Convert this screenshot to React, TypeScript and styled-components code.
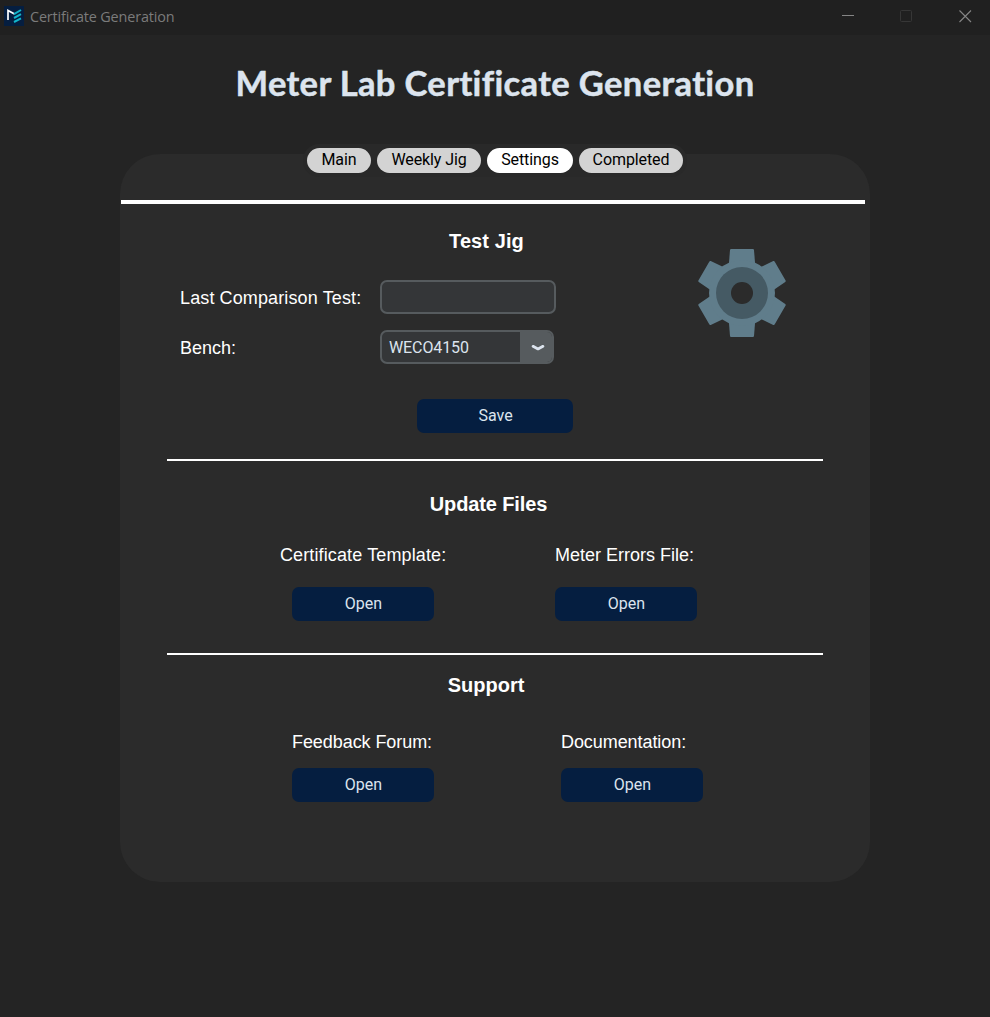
import React from "react";
import styled, { createGlobalStyle } from "styled-components";

const GlobalStyle = createGlobalStyle`
  * { box-sizing: border-box; }
  html, body { margin: 0; padding: 0; background: #242424; }
  button, input { font: inherit; margin: 0; }
`;

const Window = styled.div`
  width: 990px;
  height: 1017px;
  overflow: hidden;
  display: flex;
  flex-direction: column;
  align-items: center;
  background: #242424;
  font-family: Roboto, sans-serif;
  font-size: 16px;
`;

const TitleBar = styled.header`
  width: 100%;
  height: 35px;
  flex: none;
  display: flex;
  align-items: flex-start;
  background: #202020;
  padding: 6px 18px 0 4px;
`;

const Caption = styled.span`
  margin-left: 6px;
  font: 14.4px/21px "Open Sans", sans-serif;
  letter-spacing: -0.15px;
  color: #7b7b7b;
  flex: 1;
`;

const WindowControls = styled.div`
  display: flex;
  gap: 46px;
  padding-top: 4px;
  svg { display: block; }
`;

const PageTitle = styled.h1`
  margin: 26px 0 0;
  height: 83px;
  font: 700 34.5px/44px Lato, sans-serif;
  letter-spacing: 0.37px;
  -webkit-text-stroke: 0.5px #dce4ee;
  color: #dce4ee;
  white-space: nowrap;
`;

const Panel = styled.main`
  width: 750px;
  height: 728px;
  margin-top: 10px;
  flex: none;
  display: flex;
  flex-direction: column;
  background: #2b2b2b;
  border-radius: 40px;
`;

const Tabs = styled.nav`
  align-self: center;
  display: flex;
  flex: none;
  gap: 6px;
  height: 33px;
  margin-top: -10px;
  padding: 4px;
  border-radius: 16px;
  background: #292929;
`;

const Tab = styled.button<{ $width: number; $active?: boolean }>`
  width: ${(p) => p.$width}px;
  height: 25px;
  padding: 0 0 2px;
  border: 0;
  border-radius: 13px;
  background: ${(p) => (p.$active ? "#ffffff" : "#d3d3d3")};
  color: #000;
  line-height: 23px;
  letter-spacing: -0.1px;
  white-space: nowrap;
`;

const HeaderRule = styled.div`
  height: 4px;
  flex: none;
  margin: 23px 5px 0 1px;
  background: #fff;
`;

const Rule = styled.div<{ $top: number }>`
  height: 2px;
  flex: none;
  margin: ${(p) => p.$top}px 47px 0;
  background: #fff;
`;

const SectionTitle = styled.h2<{ $shift: number; $spacing?: number }>`
  width: 750px;
  margin: 0;
  padding-right: ${(p) => p.$shift}px;
  font: 700 20px/24px "Liberation Sans", Arial, sans-serif;
  letter-spacing: ${(p) => p.$spacing ?? 0}px;
  text-align: center;
  color: #fff;
`;

const Label = styled.label<{ $spacing?: number }>`
  font: 18px/24px "Liberation Sans", Arial, sans-serif;
  letter-spacing: ${(p) => p.$spacing ?? 0}px;
  color: #fff;
  white-space: nowrap;
`;

const JigSection = styled.section`
  display: grid;
  grid-template-columns: 578px 88px;
  grid-template-rows: 20px 68px 71px;
  padding-top: 25px;
`;

const Fields = styled.div`
  grid-column: 1;
  grid-row: 2 / 4;
  display: grid;
  align-content: start;
  grid-template-columns: 200px 176px;
  grid-auto-rows: 34px;
  row-gap: 16px;
  align-items: center;
  padding: 31px 0 0 60px;

  ${Label} { padding-top: 2px; }
`;

const Gear = styled.svg`
  grid-column: 2;
  grid-row: 2 / 4;
`;

const TextField = styled.input`
  width: 176px;
  height: 34px;
  padding: 0 7px;
  border: 2px solid #565b5e;
  border-radius: 7px;
  background: #343638;
  color: #dce4ee;
  outline: none;
`;

const Combo = styled.div`
  display: flex;
  width: 174px;
  height: 34px;
  border: 2px solid #565b5e;
  border-radius: 7px;
  background: #343638;
  color: #dce4ee;
  line-height: 32px;
  overflow: hidden;
`;

const ComboValue = styled.span`
  flex: 1;
  padding-left: 7px;
  letter-spacing: -0.1px;
`;

const ComboArrow = styled.span`
  width: 32px;
  background: #565b5e;
  svg { display: block; }
`;

const ActionButton = styled.button<{ $width?: number }>`
  width: ${(p) => p.$width ?? 142}px;
  height: 34px;
  padding: 0 0 1px 1px;
  border: 0;
  border-radius: 7px;
  background: #051e40;
  color: #dce4ee;
`;

const SaveRow = styled.div`
  display: flex;
  justify-content: center;
  padding-top: 11px;
`;

const LinkSection = styled.section<{ $top: number }>`
  padding-top: ${(p) => p.$top}px;
`;

const LinkGrid = styled.div<{ $columns: string; $left: number; $top: number; $gap: number }>`
  display: grid;
  grid-template-columns: ${(p) => p.$columns};
  row-gap: ${(p) => p.$gap}px;
  padding: ${(p) => p.$top}px 0 0 ${(p) => p.$left}px;
`;

const Indented = styled.div`
  padding-left: 12px;
`;

const teeth = [0, 60, 120, 180, 240, 300];

export default function App() {
  return (
    <>
      <GlobalStyle />
      <Window>
        <TitleBar>
          <svg width="20" height="20" viewBox="0 0 20 20">
            <rect width="20" height="20" fill="#051e40" />
            <path d="M4 14V4.5L10.5 8" fill="none" stroke="#fff" strokeWidth="1.7" />
            <path d="M10 8.2L17 4M10 12L17 8.2M10 16L17 12.4" stroke="#12b5cb" strokeWidth="2" />
          </svg>
          <Caption>Certificate Generation</Caption>
          <WindowControls>
            <svg width="13" height="13"><path d="M1 5.5H13" stroke="#858585" /></svg>
            <svg width="13" height="13"><rect x="0.5" y="0.5" width="11" height="11" rx="1" fill="none" stroke="#363636" /></svg>
            <svg width="13" height="13"><path d="M0.5 0.5L12 12M12 0.5L0.5 12" stroke="#858585" strokeWidth="1.1" /></svg>
          </WindowControls>
        </TitleBar>
        <PageTitle>Meter Lab Certificate Generation</PageTitle>
        <Panel>
          <Tabs>
            <Tab $width={64}>Main</Tab>
            <Tab $width={104}>Weekly Jig</Tab>
            <Tab $width={86} $active>Settings</Tab>
            <Tab $width={104}>Completed</Tab>
          </Tabs>
          <HeaderRule />
          <JigSection>
            <SectionTitle $shift={17} $spacing={0.1}>Test Jig</SectionTitle>
            <Fields>
              <Label htmlFor="last" $spacing={0.12}>Last Comparison Test:</Label>
              <TextField id="last" />
              <Label>Bench:</Label>
              <Combo>
                <ComboValue>WECO4150</ComboValue>
                <ComboArrow>
                  <svg width="32" height="30" viewBox="0 0 32 30">
                    <path d="M13 14.3L18 17L23 14.3" fill="none" stroke="#dce4ee" strokeWidth="2.7" strokeLinecap="round" strokeLinejoin="round" />
                  </svg>
                </ComboArrow>
              </Combo>
            </Fields>
            <Gear width="88" height="88" viewBox="-44 -44 88 88">
              {teeth.map((angle) => (
                <path
                  key={angle}
                  transform={`rotate(${angle})`}
                  d="M-13.5 -24L-12 -43Q-11.8 -44 -11 -44H11Q11.8 -44 12 -43L13.5 -24Z"
                  fill="#607d8b"
                />
              ))}
              <circle r="33" fill="#607d8b" />
              <circle r="26" fill="#455a64" />
              <circle r="11" fill="#2b2b2b" />
            </Gear>
          </JigSection>
          <SaveRow><ActionButton $width={156}>Save</ActionButton></SaveRow>
          <Rule $top={26} />
          <LinkSection $top={31}>
            <SectionTitle $shift={13} $spacing={-0.12}>Update Files</SectionTitle>
            <LinkGrid $columns="275px 200px" $left={160} $top={27} $gap={20}>
              <Label $spacing={0.12}>Certificate Template:</Label>
              <Label>Meter Errors File:</Label>
              <Indented><ActionButton>Open</ActionButton></Indented>
              <ActionButton>Open</ActionButton>
            </LinkGrid>
          </LinkSection>
          <Rule $top={32} />
          <LinkSection $top={18}>
            <SectionTitle $shift={18}>Support</SectionTitle>
            <LinkGrid $columns="269px 200px" $left={172} $top={33} $gap={14}>
              <Label $spacing={-0.07}>Feedback Forum:</Label>
              <Label $spacing={-0.07}>Documentation:</Label>
              <ActionButton>Open</ActionButton>
              <ActionButton>Open</ActionButton>
            </LinkGrid>
          </LinkSection>
        </Panel>
      </Window>
    </>
  );
}
